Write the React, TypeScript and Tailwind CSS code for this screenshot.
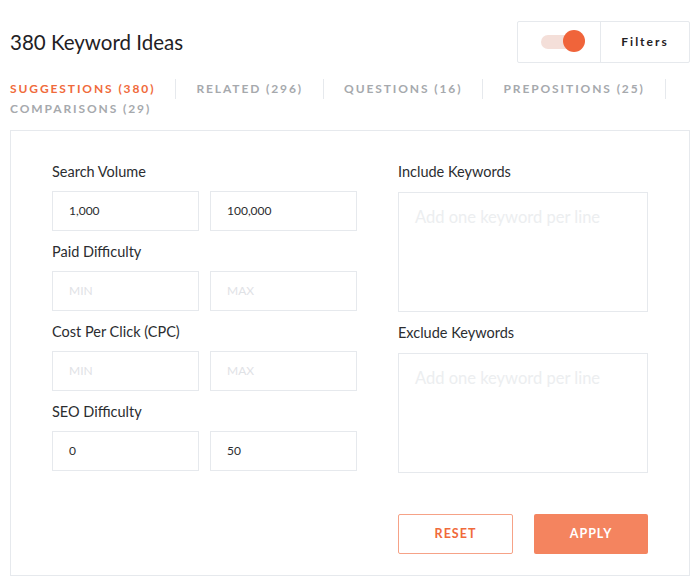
import React from 'react'

const tabs = [
  { label: 'SUGGESTIONS (380)', active: true },
  { label: 'RELATED (296)' },
  { label: 'QUESTIONS (16)' },
  { label: 'PREPOSITIONS (25)' },
]

function RangeField({ label, min, max, first }: { label: string; min?: string; max?: string; first?: boolean }) {
  return (
    <div className={first ? '' : 'mt-[11px]'}>
      <p className="h-5 leading-5 text-[14.5px] text-[#2b2d30]">{label}</p>
      <div className="mt-[9px] flex gap-[11px]">
        <div className="w-[147px] h-10 border border-[#e6e9ed] flex items-center pl-4 text-[12px]">
          {min ? <span className="text-[#2b2d30]">{min}</span> : <span className="text-[#dfe2e6]">MIN</span>}
        </div>
        <div className="w-[147px] h-10 border border-[#e6e9ed] flex items-center pl-4 text-[12px]">
          {max ? <span className="text-[#2b2d30]">{max}</span> : <span className="text-[#dfe2e6]">MAX</span>}
        </div>
      </div>
    </div>
  )
}

function KeywordBox({ label, first }: { label: string; first?: boolean }) {
  return (
    <div className={first ? '' : 'mt-[11px]'}>
      <p className="h-5 leading-5 text-[14.5px] text-[#2b2d30]">{label}</p>
      <div className="mt-[10px] w-[250px] h-[120px] border border-[#e6e9ed] px-4 pt-[12px] text-[16.5px] text-[#eceef0]">
        Add one keyword per line
      </div>
    </div>
  )
}

export default function App() {
  return (
    <div className="w-[700px] h-[585px] bg-white px-[10px] pt-[21px] overflow-hidden" style={{ fontFamily: 'Lato, "Open Sans", sans-serif' }}>
      {/* header */}
      <div className="flex items-center justify-between">
        <h1 className="text-[20.5px] text-[#1f2124] leading-[42px]">380 Keyword Ideas</h1>
        <div className="w-[173px] h-[42px] border border-[#e6e9ed] rounded-[2px] flex">
          <div className="w-[83px] flex items-center justify-center border-r border-[#e6e9ed]">
            <div className="relative w-[42px] h-[14px] rounded-full bg-[#f4dfd9] ml-[6px]">
              <div className="absolute -right-[2px] -top-[5px] w-[22px] h-[22px] rounded-full bg-[#f0643a]" />
            </div>
          </div>
          <div className="flex-1 flex items-center justify-center text-[12px] font-bold tracking-[2px] text-[#1f2124]">Filters</div>
        </div>
      </div>

      {/* tabs */}
      <div className="mt-[16px] text-[12px] font-bold tracking-[1.9px] leading-5 whitespace-nowrap">
        <div className="flex">
          {tabs.map((t) => (
            <div key={t.label} className="flex items-center shrink-0">
              <span className={t.active ? 'text-[#f06a3b]' : 'text-[#a6a9ad]'}>{t.label}</span>
              <span className="mx-[20px] w-px h-5 bg-[#e6e9ed]" />
            </div>
          ))}
        </div>
        <div className="text-[#a6a9ad]">COMPARISONS (29)</div>
      </div>

      {/* filters panel */}
      <div className="mt-[11px] h-[446px] border border-[#e6e9ed] pl-[41px] pr-[41px] pt-[31px] flex justify-between">
        <div>
          <RangeField label="Search Volume" min="1,000" max="100,000" first />
          <RangeField label="Paid Difficulty" />
          <RangeField label="Cost Per Click (CPC)" />
          <RangeField label="SEO Difficulty" min="0" max="50" />
        </div>
        <div className="w-[250px]">
          <KeywordBox label="Include Keywords" first />
          <KeywordBox label="Exclude Keywords" />
          <div className="mt-[41px] flex justify-between">
            <button className="w-[115px] h-[40px] border border-[#f6a287] rounded-[2px] text-[#f06a3b] text-[12.5px] font-bold tracking-[1px]">RESET</button>
            <button className="w-[114px] h-[40px] bg-[#f4845f] rounded-[2px] text-white text-[12.5px] font-bold tracking-[1px]">APPLY</button>
          </div>
        </div>
      </div>
    </div>
  )
}
